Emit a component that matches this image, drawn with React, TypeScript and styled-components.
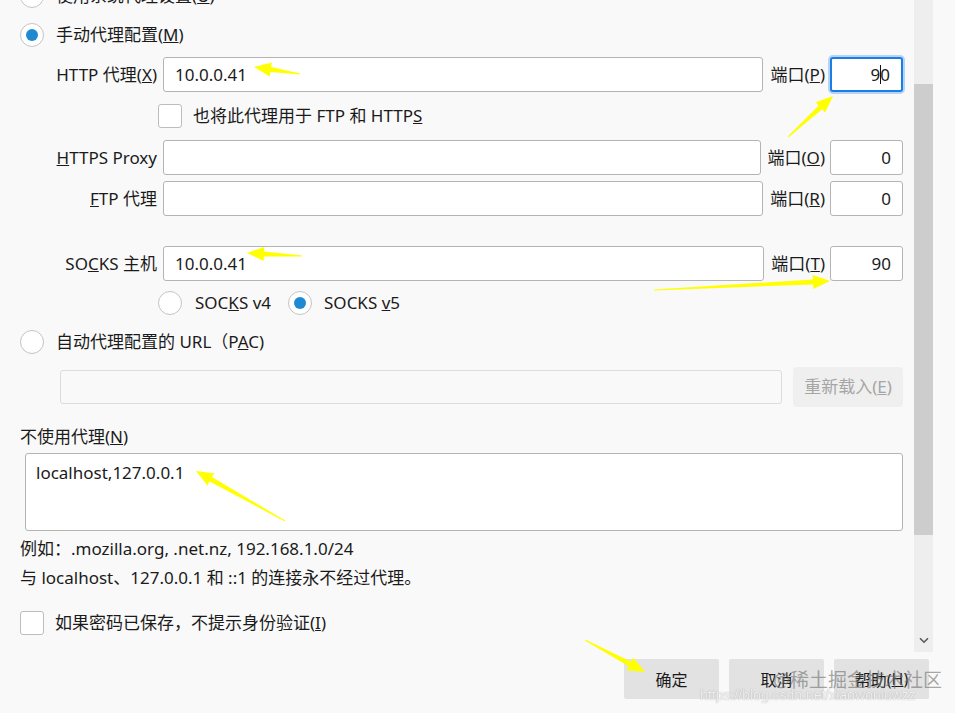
import React from 'react'
import styled, { createGlobalStyle } from 'styled-components'

const GlobalStyle = createGlobalStyle`
  html, body {
    margin: 0;
    padding: 0;
    background: #f9f9f9;
  }
  body {
    font-family: "Noto Sans", "Noto Sans CJK SC", sans-serif;
    font-size: 17px;
    color: #1b1b1b;
  }
`

const Page = styled.div`
  position: relative;
  width: 955px;
  height: 713px;
  overflow: hidden;
  background: #f9f9f9;
  display: flex;
  flex-direction: column;
`

const Main = styled.div`
  display: flex;
  height: 652px;
`

const Viewport = styled.div`
  flex: 1;
  overflow: hidden;
  padding: 0 11px 0 20px;
`

const Scroller = styled.div`
  margin-top: -16px;
  display: flex;
  flex-direction: column;
`

const Row = styled.div<{ $mt?: number; $indent?: number }>`
  display: flex;
  align-items: center;
  margin-top: ${({ $mt }) => $mt ?? 0}px;
  padding-left: ${({ $indent }) => $indent ?? 0}px;
  line-height: 22px;
  white-space: nowrap;
`

const RadioCircle = styled.span<{ $checked?: boolean }>`
  position: relative;
  width: 24px;
  height: 24px;
  box-sizing: border-box;
  border-radius: 50%;
  border: 1px solid #c4c4c4;
  background: #fff;
  flex-shrink: 0;

  &::after {
    content: '';
    display: ${({ $checked }) => ($checked ? 'block' : 'none')};
    position: absolute;
    left: 5px;
    top: 5px;
    width: 12px;
    height: 12px;
    border-radius: 50%;
    background: #1f8ad2;
  }
`

const CheckBox = styled.span`
  width: 24px;
  height: 24px;
  box-sizing: border-box;
  border: 1px solid #bdbdbd;
  border-radius: 3px;
  background: #fff;
  flex-shrink: 0;
`

const OptionText = styled.span<{ $gap?: number }>`
  margin-left: ${({ $gap }) => $gap ?? 12}px;
`

const FieldLabel = styled.span`
  width: 101px;
  flex-shrink: 0;
  text-align: right;
  margin-left: 36px;
  margin-right: 6px;
`

const Field = styled.div<{ $focused?: boolean; $align?: 'left' | 'right' }>`
  height: 35px;
  box-sizing: border-box;
  display: flex;
  align-items: center;
  justify-content: ${({ $align }) => ($align === 'right' ? 'flex-end' : 'flex-start')};
  padding: 0 11px;
  background: #fff;
  border: ${({ $focused }) => ($focused ? '2px solid #1a7ee6' : '1px solid #b4b4b4')};
  border-radius: 3px;
  box-shadow: ${({ $focused }) => ($focused ? '0 0 0 2px rgba(26, 126, 230, 0.3)' : 'none')};
`

const HostField = styled(Field)`
  flex: 1;
  min-width: 0;
`

const PortLabel = styled.span`
  margin: 0 5px 0 7px;
`

const PortField = styled(Field)`
  width: 73px;
  flex-shrink: 0;
`

const Caret = styled.span`
  display: inline-block;
  width: 1px;
  height: 19px;
  background: #111;
  margin: 0 -0.5px;
  vertical-align: middle;
`

const DisabledField = styled.div`
  flex: 1;
  height: 34px;
  box-sizing: border-box;
  background: #f9f9f9;
  border: 1px solid #dcdcdc;
  border-radius: 3px;
`

const ReloadButton = styled.div`
  width: 110px;
  height: 40px;
  margin-left: 11px;
  display: flex;
  align-items: center;
  justify-content: center;
  background: #efefef;
  color: #a5a5a5;
  border-radius: 4px;
`

const Label = styled.div<{ $mt: number }>`
  margin-top: ${({ $mt }) => $mt}px;
  line-height: 20px;
  white-space: nowrap;
`

const TextArea = styled.div`
  margin: 6px 0 0 5px;
  height: 78px;
  box-sizing: border-box;
  padding: 8px 10px;
  background: #fff;
  border: 1px solid #b4b4b4;
  border-radius: 3px;
  line-height: 22px;
`

const Hint = styled.div<{ $mt: number }>`
  margin-top: ${({ $mt }) => $mt}px;
  line-height: 22px;
  white-space: nowrap;
`

const ScrollBar = styled.div`
  width: 19px;
  margin-right: 22px;
  display: flex;
  flex-direction: column;
`

const Track = styled.div<{ $h?: number }>`
  height: ${({ $h }) => ($h ? `${$h}px` : 'auto')};
  flex: ${({ $h }) => ($h ? 'none' : '1')};
  background: #eeeeee;
  display: flex;
  align-items: flex-end;
  justify-content: center;
  padding-bottom: ${({ $h }) => ($h ? 0 : 8)}px;
`

const Thumb = styled.div`
  height: 451px;
  background: #cdcdcd;
`

const ButtonBar = styled.div`
  flex: 1;
  display: flex;
  justify-content: flex-end;
  gap: 10px;
  padding: 7px 26px 0 0;
`

const DialogButton = styled.div`
  width: 95px;
  height: 40px;
  display: flex;
  align-items: center;
  justify-content: center;
  background: #e2e2e2;
  border-radius: 2px;
  font-size: 16px;
`

const WatermarkMain = styled.div`
  position: absolute;
  left: 773px;
  top: 668px;
  font-size: 19px;
  line-height: 24px;
  color: rgba(110, 110, 110, 0.6);
  white-space: nowrap;
`

const WatermarkUrl = styled.div`
  position: absolute;
  left: 700px;
  top: 686px;
  font-family: "Liberation Sans", sans-serif;
  font-size: 14px;
  line-height: 18px;
  color: rgba(255, 255, 255, 0.85);
  text-shadow: 0 0 1px rgba(120, 120, 120, 0.7);
  white-space: nowrap;
`

const Overlay = styled.svg`
  position: absolute;
  left: 0;
  top: 0;
  pointer-events: none;
`

type Arrow = [number, number, number, number]

// tail x, tail y, tip x, tip y
const arrows: Arrow[] = [
  [300, 74, 254, 67],
  [788, 137, 833, 96],
  [302, 256, 247, 253],
  [654, 290, 830, 281],
  [285, 521, 196, 471],
  [585, 640, 645, 672],
]

function arrowPoints([x1, y1, x2, y2]: Arrow) {
  const len = Math.hypot(x2 - x1, y2 - y1)
  const dx = (x2 - x1) / len
  const dy = (y2 - y1) / len
  const nx = -dy
  const ny = dx
  const head = 17
  const bx = x2 - dx * head
  const by = y2 - dy * head
  const pts = [
    [x1 + nx * 0.5, y1 + ny * 0.5],
    [bx + nx * 2.5, by + ny * 2.5],
    [bx + nx * 7, by + ny * 7],
    [x2, y2],
    [bx - nx * 7, by - ny * 7],
    [bx - nx * 2.5, by - ny * 2.5],
    [x1 - nx * 0.5, y1 - ny * 0.5],
  ]
  return pts.map(([x, y]) => `${x.toFixed(1)},${y.toFixed(1)}`).join(' ')
}

const App: React.FC = () => {
  return (
    <>
      <GlobalStyle />
      <Page>
        <Main>
          <Viewport>
            <Scroller>
              <Row>
                <RadioCircle />
                <OptionText>使用系统代理设置(<u>U</u>)</OptionText>
              </Row>
              <Row $mt={15}>
                <RadioCircle $checked />
                <OptionText>手动代理配置(<u>M</u>)</OptionText>
              </Row>

              <Row $mt={10}>
                <FieldLabel>HTTP 代理(<u>X</u>)</FieldLabel>
                <HostField>10.0.0.41</HostField>
                <PortLabel>端口(<u>P</u>)</PortLabel>
                <PortField $focused $align="right">
                  9<Caret />0
                </PortField>
              </Row>
              <Row $mt={12} $indent={138}>
                <CheckBox />
                <OptionText $gap={11}>也将此代理用于 FTP 和 HTTP<u>S</u></OptionText>
              </Row>
              <Row $mt={12}>
                <FieldLabel><u>H</u>TTPS Proxy</FieldLabel>
                <HostField />
                <PortLabel>端口(<u>O</u>)</PortLabel>
                <PortField $align="right">0</PortField>
              </Row>
              <Row $mt={6}>
                <FieldLabel><u>F</u>TP 代理</FieldLabel>
                <HostField />
                <PortLabel>端口(<u>R</u>)</PortLabel>
                <PortField $align="right">0</PortField>
              </Row>

              <Row $mt={30}>
                <FieldLabel>SO<u>C</u>KS 主机</FieldLabel>
                <HostField>10.0.0.41</HostField>
                <PortLabel>端口(<u>T</u>)</PortLabel>
                <PortField $align="right">90</PortField>
              </Row>
              <Row $mt={10} $indent={138}>
                <RadioCircle />
                <OptionText $gap={13}>SOC<u>K</u>S v4</OptionText>
                <OptionText $gap={17} />
                <RadioCircle $checked />
                <OptionText $gap={12}>SOCKS <u>v</u>5</OptionText>
              </Row>

              <Row $mt={15}>
                <RadioCircle />
                <OptionText>自动代理配置的 URL（P<u>A</u>C)</OptionText>
              </Row>
              <Row $mt={13} $indent={40}>
                <DisabledField />
                <ReloadButton>重新载入(<u>E</u>)</ReloadButton>
              </Row>

              <Label $mt={20}>不使用代理(<u>N</u>)</Label>
              <TextArea>localhost,127.0.0.1</TextArea>
              <Hint $mt={7}>例如：.mozilla.org, .net.nz, 192.168.1.0/24</Hint>
              <Hint $mt={7}>与 localhost、127.0.0.1 和 ::1 的连接永不经过代理。</Hint>

              <Row $mt={22}>
                <CheckBox />
                <OptionText $gap={11}>如果密码已保存，不提示身份验证(<u>I</u>)</OptionText>
              </Row>
            </Scroller>
          </Viewport>
          <ScrollBar>
            <Track $h={84} />
            <Thumb />
            <Track>
              <svg width="10" height="7" viewBox="0 0 10 7">
                <path d="M1 1.2 L5 5.2 L9 1.2" fill="none" stroke="#5a5a5a" strokeWidth="1.6" />
              </svg>
            </Track>
          </ScrollBar>
        </Main>
        <ButtonBar>
          <DialogButton>确定</DialogButton>
          <DialogButton>取消</DialogButton>
          <DialogButton>帮助(<u>H</u>)</DialogButton>
        </ButtonBar>

        <WatermarkMain>@稀土掘金技术社区</WatermarkMain>
        <WatermarkUrl>https://blog.csdn.net/xiaowoniuwzz</WatermarkUrl>

        <Overlay width={955} height={713} viewBox="0 0 955 713">
          {arrows.map((a, i) => (
            <polygon key={i} points={arrowPoints(a)} fill="#ffff00" />
          ))}
        </Overlay>
      </Page>
    </>
  )
}

export default App
